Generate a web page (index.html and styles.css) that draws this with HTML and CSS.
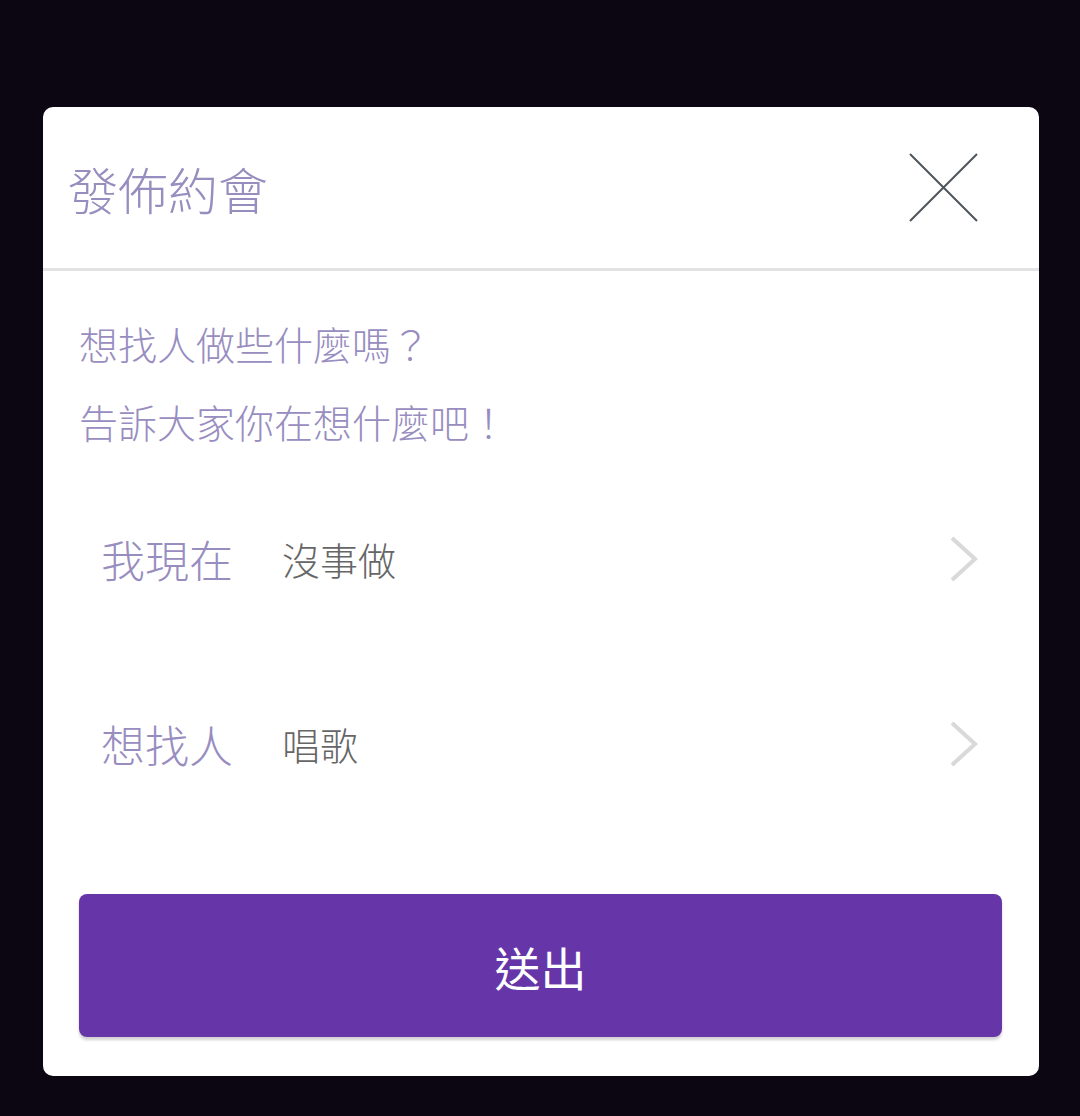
FILE: index.html
```html
<!DOCTYPE html>
<html lang="zh-Hant">
  <head>
    <meta charset="UTF-8" />
    <meta name="viewport" content="width=device-width, initial-scale=1.0" />
    <title>發佈約會</title>
    <link rel="stylesheet" href="styles.css">
  </head>
  <body>
    <!-- Post Date Dialog -->
    <div class="dialog">
      <div class="dialog-header">
        <h1 class="dialog-title">發佈約會</h1>
        <button class="close-btn" aria-label="close">
          <svg width="70" height="70" viewBox="0 0 70 70">
            <path d="M1 1 L68 68 M68 1 L1 68" stroke="#4d555b" stroke-width="2" fill="none" />
          </svg>
        </button>
      </div>

      <div class="dialog-body">
        <p class="hint">想找人做些什麼嗎？</p>
        <p class="hint">告訴大家你在想什麼吧！</p>

        <div class="rows">
          <div class="row">
            <span class="row-label">我現在</span>
            <span class="row-value">沒事做</span>
            <svg class="chevron" width="30" height="46" viewBox="0 0 30 46">
              <path d="M3 2 L26 23 L3 44" stroke="#d9d9d9" stroke-width="4" fill="none" />
            </svg>
          </div>

          <div class="row">
            <span class="row-label">想找人</span>
            <span class="row-value">唱歌</span>
            <svg class="chevron" width="30" height="46" viewBox="0 0 30 46">
              <path d="M3 2 L26 23 L3 44" stroke="#d9d9d9" stroke-width="4" fill="none" />
            </svg>
          </div>
        </div>

        <button class="submit-btn">送出</button>
      </div>
    </div>
  </body>
</html>
```

FILE: styles.css
```css
body {
  background-color: #0b0611;
  margin: 0;
  padding: 0;
  font-family: "Noto Sans CJK TC", "Noto Sans", sans-serif;
}

.dialog {
  width: 996px;
  height: 969px;
  margin: 107px 0 0 43px;
  background-color: #fff;
  border-radius: 10px;
  box-sizing: border-box;
}

.dialog-header {
  height: 161px;
  display: flex;
  align-items: center;
  justify-content: space-between;
  padding: 0 60px 0 25px;
  border-bottom: 3px solid #e3e3e3;
}

.dialog-title {
  margin: 0;
  font-size: 50px;
  font-weight: 300;
  color: #988dbf;
  line-height: 1;
}

.close-btn {
  background: transparent;
  border: none;
  padding: 0;
  width: 70px;
  height: 70px;
  cursor: pointer;
}

.close-btn svg {
  display: block;
}

.dialog-body {
  padding: 33px 37px 0 36px;
}

.hint {
  margin: 0;
  font-size: 39px;
  font-weight: 300;
  line-height: 78px;
  color: #988dbf;
}

.rows {
  margin-top: 6px;
}

.row {
  height: 185px;
  display: flex;
  align-items: center;
  padding: 0 23px 0 22px;
}

.row-label {
  font-size: 44px;
  font-weight: 300;
  color: #988dbf;
  width: 181px;
}

.row-value {
  font-size: 38px;
  font-weight: 300;
  color: #666;
  flex: 1;
}

.chevron {
  display: block;
}

.submit-btn {
  display: block;
  width: 100%;
  height: 143px;
  margin-top: 58px;
  background-color: #6636a8;
  color: #fff;
  border: none;
  border-radius: 8px;
  font-family: inherit;
  font-size: 46px;
  box-shadow: 0 3px 3px rgba(0, 0, 0, 0.18);
  cursor: pointer;
}
```
